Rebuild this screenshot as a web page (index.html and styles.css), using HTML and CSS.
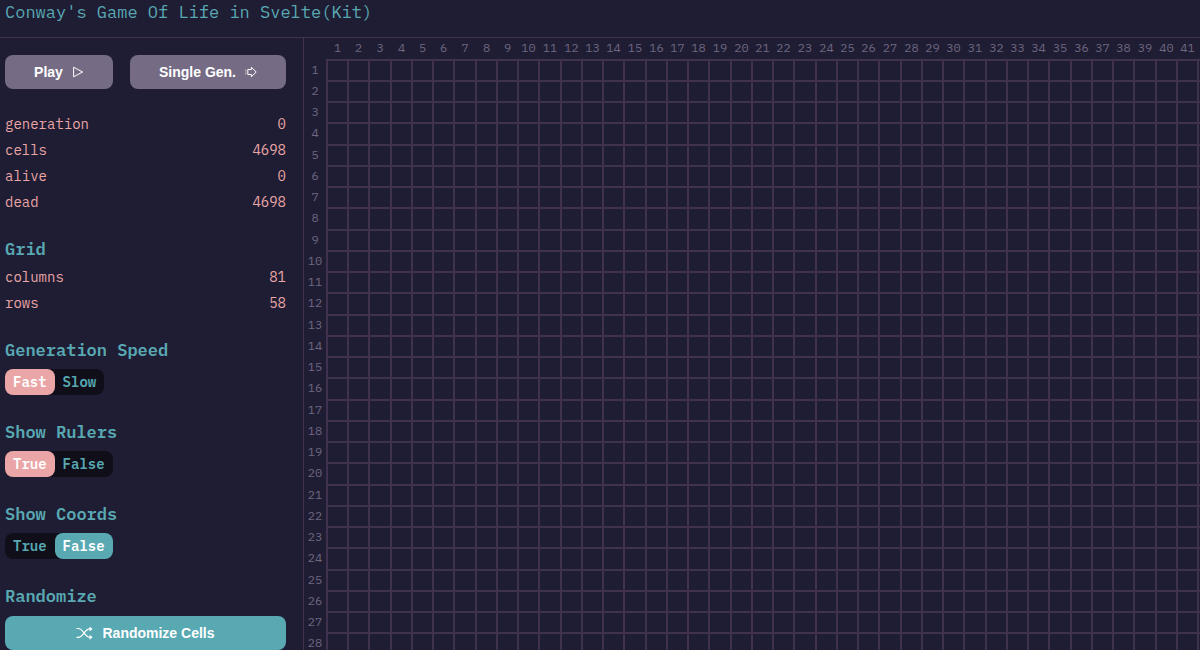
FILE: index.html
```html
<!DOCTYPE html>
<html lang="en">
<head>
<meta charset="utf-8">
<meta name="viewport" content="width=device-width, initial-scale=1">
<title>Conway's Game Of Life in Svelte(Kit)</title>
<link rel="stylesheet" href="styles.css">
</head>
<body>
<header class="header"><h1 class="title">Conway's Game Of Life in Svelte(Kit)</h1></header>
<div class="layout">
  <aside class="sidebar">
    <div class="actions">
      <button class="button button-play" type="button">Play
        <svg class="icon" viewBox="0 0 12 12" width="12" height="12" aria-hidden="true"><path d="M1.6 1.2 10.6 6 1.6 10.8Z"/></svg>
      </button>
      <button class="button button-step" type="button">Single Gen.
        <svg class="icon" viewBox="0 0 12 12" width="12" height="12" aria-hidden="true"><path d="M2.8 3.5H6.4V1.2L11.2 6 6.4 10.8V8.5H2.8Z"/><path class="faint" d="M.8 3.2V8.8"/></svg>
      </button>
    </div>
    <dl class="stats">
      <div class="stat"><dt>generation</dt><dd>0</dd></div>
      <div class="stat"><dt>cells</dt><dd>4698</dd></div>
      <div class="stat"><dt>alive</dt><dd>0</dd></div>
      <div class="stat"><dt>dead</dt><dd>4698</dd></div>
    </dl>
    <section>
      <h2 class="heading">Grid</h2>
      <dl class="stats">
        <div class="stat"><dt>columns</dt><dd>81</dd></div>
        <div class="stat"><dt>rows</dt><dd>58</dd></div>
      </dl>
    </section>
    <section>
      <h2 class="heading" id="speed">Generation Speed</h2>
      <div class="toggle" role="radiogroup" aria-labelledby="speed">
        <label class="option option-on"><input type="radio" name="speed" checked><span>Fast</span></label>
        <label class="option option-off"><input type="radio" name="speed"><span>Slow</span></label>
      </div>
    </section>
    <section>
      <h2 class="heading" id="rulers">Show Rulers</h2>
      <div class="toggle" role="radiogroup" aria-labelledby="rulers">
        <label class="option option-on"><input type="radio" name="rulers" checked><span>True</span></label>
        <label class="option option-off"><input type="radio" name="rulers"><span>False</span></label>
      </div>
    </section>
    <section>
      <h2 class="heading" id="coords">Show Coords</h2>
      <div class="toggle" role="radiogroup" aria-labelledby="coords">
        <label class="option option-on"><input type="radio" name="coords"><span>True</span></label>
        <label class="option option-off"><input type="radio" name="coords" checked><span>False</span></label>
      </div>
    </section>
    <section>
      <h2 class="heading">Randomize</h2>
      <button class="button button-random" type="button">
        <svg class="icon" viewBox="0 0 17 14" width="17" height="14" aria-hidden="true"><path class="bold" d="M.5 2.5H2.5C7 2.5 9 11.3 13.5 11.3H15M.5 11.3H2.5C7 11.3 9 2.9 13.5 2.9H15"/><path class="solid" d="M13.6.4 16.6 2.9 13.6 5.4ZM13.6 8.8 16.6 11.3 13.6 13.8Z"/></svg>
        Randomize Cells
      </button>
    </section>
  </aside>
  <main class="board">
    <div class="ruler ruler-columns" id="ruler-columns"></div>
    <div class="ruler ruler-rows" id="ruler-rows"></div>
    <div class="cells" id="cells"></div>
  </main>
</div>
<script src="grid.js"></script>
</body>
</html>
```
FILE: styles.css
```css
:root {
  --base: #1f1d33;
  --line: #40314e;
  --teal: #59a9b3;
  --rose: #eaa6a7;
  --mauve: #766b84;
  --muted: #6e6781;
  --night: #0f0e19;
  --mono: "IBM Plex Mono", "Liberation Mono", monospace;
}

* { box-sizing: border-box; }

body {
  margin: 0;
  height: 100vh;
  display: flex;
  flex-direction: column;
  overflow: hidden;
  background: var(--base);
  color: var(--rose);
  font-family: var(--mono);
  font-size: 14px;
}

.header {
  flex: none;
  padding: 0 5px 13px;
  border-bottom: 1px solid var(--line);
}

.title {
  margin: 0;
  color: var(--teal);
  font-size: 17px;
  font-weight: 400;
  line-height: 24px;
}

.layout {
  flex: 1;
  min-height: 0;
  display: flex;
}

.sidebar {
  flex: none;
  width: 304px;
  padding: 17px 17px 0 5px;
  display: flex;
  flex-direction: column;
  gap: 20px;
  overflow: auto;
  scrollbar-width: none;
  border-right: 1px solid var(--line);
  background: var(--base);
}

.actions {
  display: flex;
  gap: 17px;
  margin-bottom: 2px;
}

.button {
  display: flex;
  align-items: center;
  justify-content: center;
  gap: 9px;
  height: 34px;
  padding: 0;
  border: 0;
  border-radius: 8px;
  background: var(--mauve);
  color: #fff;
  font: bold 14px/17px "Liberation Sans", Arial, sans-serif;
}

.button-play { flex: 108; }
.button-step { flex: 156; }

.button-random {
  width: 100%;
  margin-top: 6px;
  background: var(--teal);
}

.icon {
  fill: none;
  stroke: currentColor;
  stroke-width: 1;
}

.icon .faint { opacity: .5; }
.icon .bold { stroke-width: 1.2; }
.icon .solid { fill: currentColor; stroke: none; }

.stats { margin: 0; }

.stat {
  display: flex;
  justify-content: space-between;
  line-height: 26px;
}

.stat dd { margin: 0; }

.heading {
  margin: 0;
  color: var(--teal);
  font-size: 17px;
  font-weight: 600;
  line-height: 28px;
}

.heading + .stats { margin-top: 1px; }

.toggle {
  display: flex;
  width: fit-content;
  margin: 5px 0 3px;
  border-radius: 8px;
  background: var(--night);
  color: var(--teal);
  font-weight: 600;
  line-height: 26px;
}

.option {
  position: relative;
}

.option input {
  position: absolute;
  inset: 0;
  margin: 0;
  opacity: 0;
}

.option span {
  display: block;
  padding: 0 8px;
  border-radius: 8px;
}

.option input:checked + span { color: #fff; }
.option-on input:checked + span { background: var(--rose); }
.option-off input:checked + span { background: var(--teal); }

.board {
  --columns: repeat(20, 21px 21px 22px 21px) 21px;
  --rows: repeat(14, 21px 21px 21px 22px) 21px 21px;
  flex: 1;
  min-width: 0;
  display: grid;
  grid-template-columns: 22px max-content;
  grid-template-rows: 21px max-content;
  overflow: auto;
  scrollbar-width: none;
  background: var(--base);
}

.ruler {
  display: grid;
  color: var(--muted);
  font-size: 12px;
  line-height: 19px;
  text-align: center;
}

.ruler-columns {
  grid-column: 2;
  grid-template-columns: var(--columns);
  padding-left: 1px;
}

.ruler-rows {
  grid-template-rows: var(--rows);
  padding-top: 1px;
}

.cells {
  display: grid;
  grid-template-columns: var(--columns);
  grid-template-rows: var(--rows);
  border: 1px solid var(--line);
}

.cell { border: 1px solid var(--line); }
```
FILE: grid.js
```js
const COLUMNS = 81;
const ROWS = 58;

function fill(id, count, build) {
  const parent = document.getElementById(id);
  for (let i = 0; i < count; i++) parent.append(build(i));
}

function rulerMark(i) {
  const mark = document.createElement('span');
  mark.textContent = i + 1;
  return mark;
}

function cell() {
  const box = document.createElement('div');
  box.className = 'cell';
  return box;
}

fill('ruler-columns', COLUMNS, rulerMark);
fill('ruler-rows', ROWS, rulerMark);
fill('cells', COLUMNS * ROWS, cell);
```
